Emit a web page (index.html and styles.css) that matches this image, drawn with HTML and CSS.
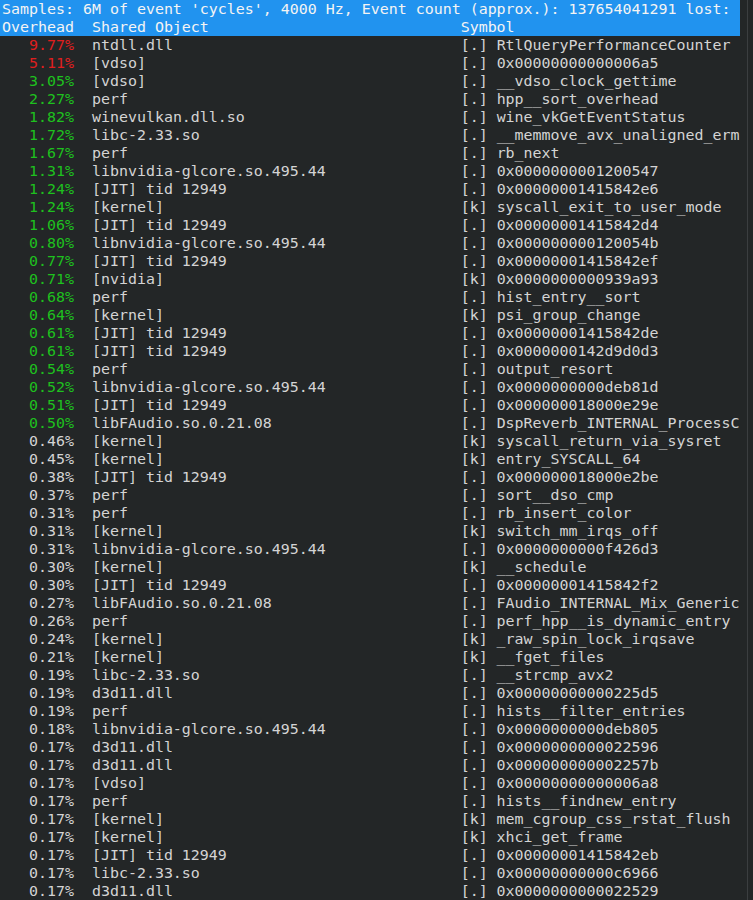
FILE: index.html
```html
<!DOCTYPE html>
<html>
<head>
<meta charset="utf-8">
<link rel="stylesheet" href="styles.css">
</head>
<body>
<div class="term">
<div class="screen">
<div class="line hdr">Samples: 6M of event 'cycles', 4000 Hz, Event count (approx.): 137654041291 lost:</div>
<div class="line hdr">Overhead  Shared Object                            Symbol</div>
<div class="line"><span class="red">   9.77%</span>  ntdll.dll                                [.] RtlQueryPerformanceCounter</div>
<div class="line"><span class="red">   5.11%</span>  [vdso]                                   [.] 0x00000000000006a5</div>
<div class="line"><span class="grn">   3.05%</span>  [vdso]                                   [.] __vdso_clock_gettime</div>
<div class="line"><span class="grn">   2.27%</span>  perf                                     [.] hpp__sort_overhead</div>
<div class="line"><span class="grn">   1.82%</span>  winevulkan.dll.so                        [.] wine_vkGetEventStatus</div>
<div class="line"><span class="grn">   1.72%</span>  libc-2.33.so                             [.] __memmove_avx_unaligned_erm</div>
<div class="line"><span class="grn">   1.67%</span>  perf                                     [.] rb_next</div>
<div class="line"><span class="grn">   1.31%</span>  libnvidia-glcore.so.495.44               [.] 0x0000000001200547</div>
<div class="line"><span class="grn">   1.24%</span>  [JIT] tid 12949                          [.] 0x00000001415842e6</div>
<div class="line"><span class="grn">   1.24%</span>  [kernel]                                 [k] syscall_exit_to_user_mode</div>
<div class="line"><span class="grn">   1.06%</span>  [JIT] tid 12949                          [.] 0x00000001415842d4</div>
<div class="line"><span class="grn">   0.80%</span>  libnvidia-glcore.so.495.44               [.] 0x000000000120054b</div>
<div class="line"><span class="grn">   0.77%</span>  [JIT] tid 12949                          [.] 0x00000001415842ef</div>
<div class="line"><span class="grn">   0.71%</span>  [nvidia]                                 [k] 0x0000000000939a93</div>
<div class="line"><span class="grn">   0.68%</span>  perf                                     [.] hist_entry__sort</div>
<div class="line"><span class="grn">   0.64%</span>  [kernel]                                 [k] psi_group_change</div>
<div class="line"><span class="grn">   0.61%</span>  [JIT] tid 12949                          [.] 0x00000001415842de</div>
<div class="line"><span class="grn">   0.61%</span>  [JIT] tid 12949                          [.] 0x0000000142d9d0d3</div>
<div class="line"><span class="grn">   0.54%</span>  perf                                     [.] output_resort</div>
<div class="line"><span class="grn">   0.52%</span>  libnvidia-glcore.so.495.44               [.] 0x0000000000deb81d</div>
<div class="line"><span class="grn">   0.51%</span>  [JIT] tid 12949                          [.] 0x000000018000e29e</div>
<div class="line"><span class="grn">   0.50%</span>  libFAudio.so.0.21.08                     [.] DspReverb_INTERNAL_ProcessC</div>
<div class="line">   0.46%  [kernel]                                 [k] syscall_return_via_sysret</div>
<div class="line">   0.45%  [kernel]                                 [k] entry_SYSCALL_64</div>
<div class="line">   0.38%  [JIT] tid 12949                          [.] 0x000000018000e2be</div>
<div class="line">   0.37%  perf                                     [.] sort__dso_cmp</div>
<div class="line">   0.31%  perf                                     [.] rb_insert_color</div>
<div class="line">   0.31%  [kernel]                                 [k] switch_mm_irqs_off</div>
<div class="line">   0.31%  libnvidia-glcore.so.495.44               [.] 0x0000000000f426d3</div>
<div class="line">   0.30%  [kernel]                                 [k] __schedule</div>
<div class="line">   0.30%  [JIT] tid 12949                          [.] 0x00000001415842f2</div>
<div class="line">   0.27%  libFAudio.so.0.21.08                     [.] FAudio_INTERNAL_Mix_Generic</div>
<div class="line">   0.26%  perf                                     [.] perf_hpp__is_dynamic_entry</div>
<div class="line">   0.24%  [kernel]                                 [k] _raw_spin_lock_irqsave</div>
<div class="line">   0.21%  [kernel]                                 [k] __fget_files</div>
<div class="line">   0.19%  libc-2.33.so                             [.] __strcmp_avx2</div>
<div class="line">   0.19%  d3d11.dll                                [.] 0x00000000000225d5</div>
<div class="line">   0.19%  perf                                     [.] hists__filter_entries</div>
<div class="line">   0.18%  libnvidia-glcore.so.495.44               [.] 0x0000000000deb805</div>
<div class="line">   0.17%  d3d11.dll                                [.] 0x0000000000022596</div>
<div class="line">   0.17%  d3d11.dll                                [.] 0x000000000002257b</div>
<div class="line">   0.17%  [vdso]                                   [.] 0x00000000000006a8</div>
<div class="line">   0.17%  perf                                     [.] hists__findnew_entry</div>
<div class="line">   0.17%  [kernel]                                 [k] mem_cgroup_css_rstat_flush</div>
<div class="line">   0.17%  [kernel]                                 [k] xhci_get_frame</div>
<div class="line">   0.17%  [JIT] tid 12949                          [.] 0x00000001415842eb</div>
<div class="line">   0.17%  libc-2.33.so                             [.] 0x00000000000c6966</div>
<div class="line">   0.17%  d3d11.dll                                [.] 0x0000000000022529</div>
</div>
<div class="scroll"></div>
</div>
</body>
</html>
```

FILE: styles.css
```css
html, body {
  margin: 0;
  padding: 0;
  background: #232627;
  height: 100%;
  overflow: hidden;
}
.term {
  display: flex;
  height: 900px;
  background: #232627;
}
.screen {
  width: 740px;
  flex: none;
  font-family: "DejaVu Sans Mono", monospace;
  font-size: 14.95px;
  line-height: 18px;
  color: #d4d4d4;
}
.line {
  white-space: pre;
  height: 18px;
  padding-left: 2px;
}
.hdr {
  background: #2193ef;
  color: #f4f4f4;
}
.red { color: #e01e1e; }
.grn { color: #1ec11e; }
.scroll {
  flex: none;
  margin-left: 7px;
  width: 1px;
  background: #3b3e40;
}
```
